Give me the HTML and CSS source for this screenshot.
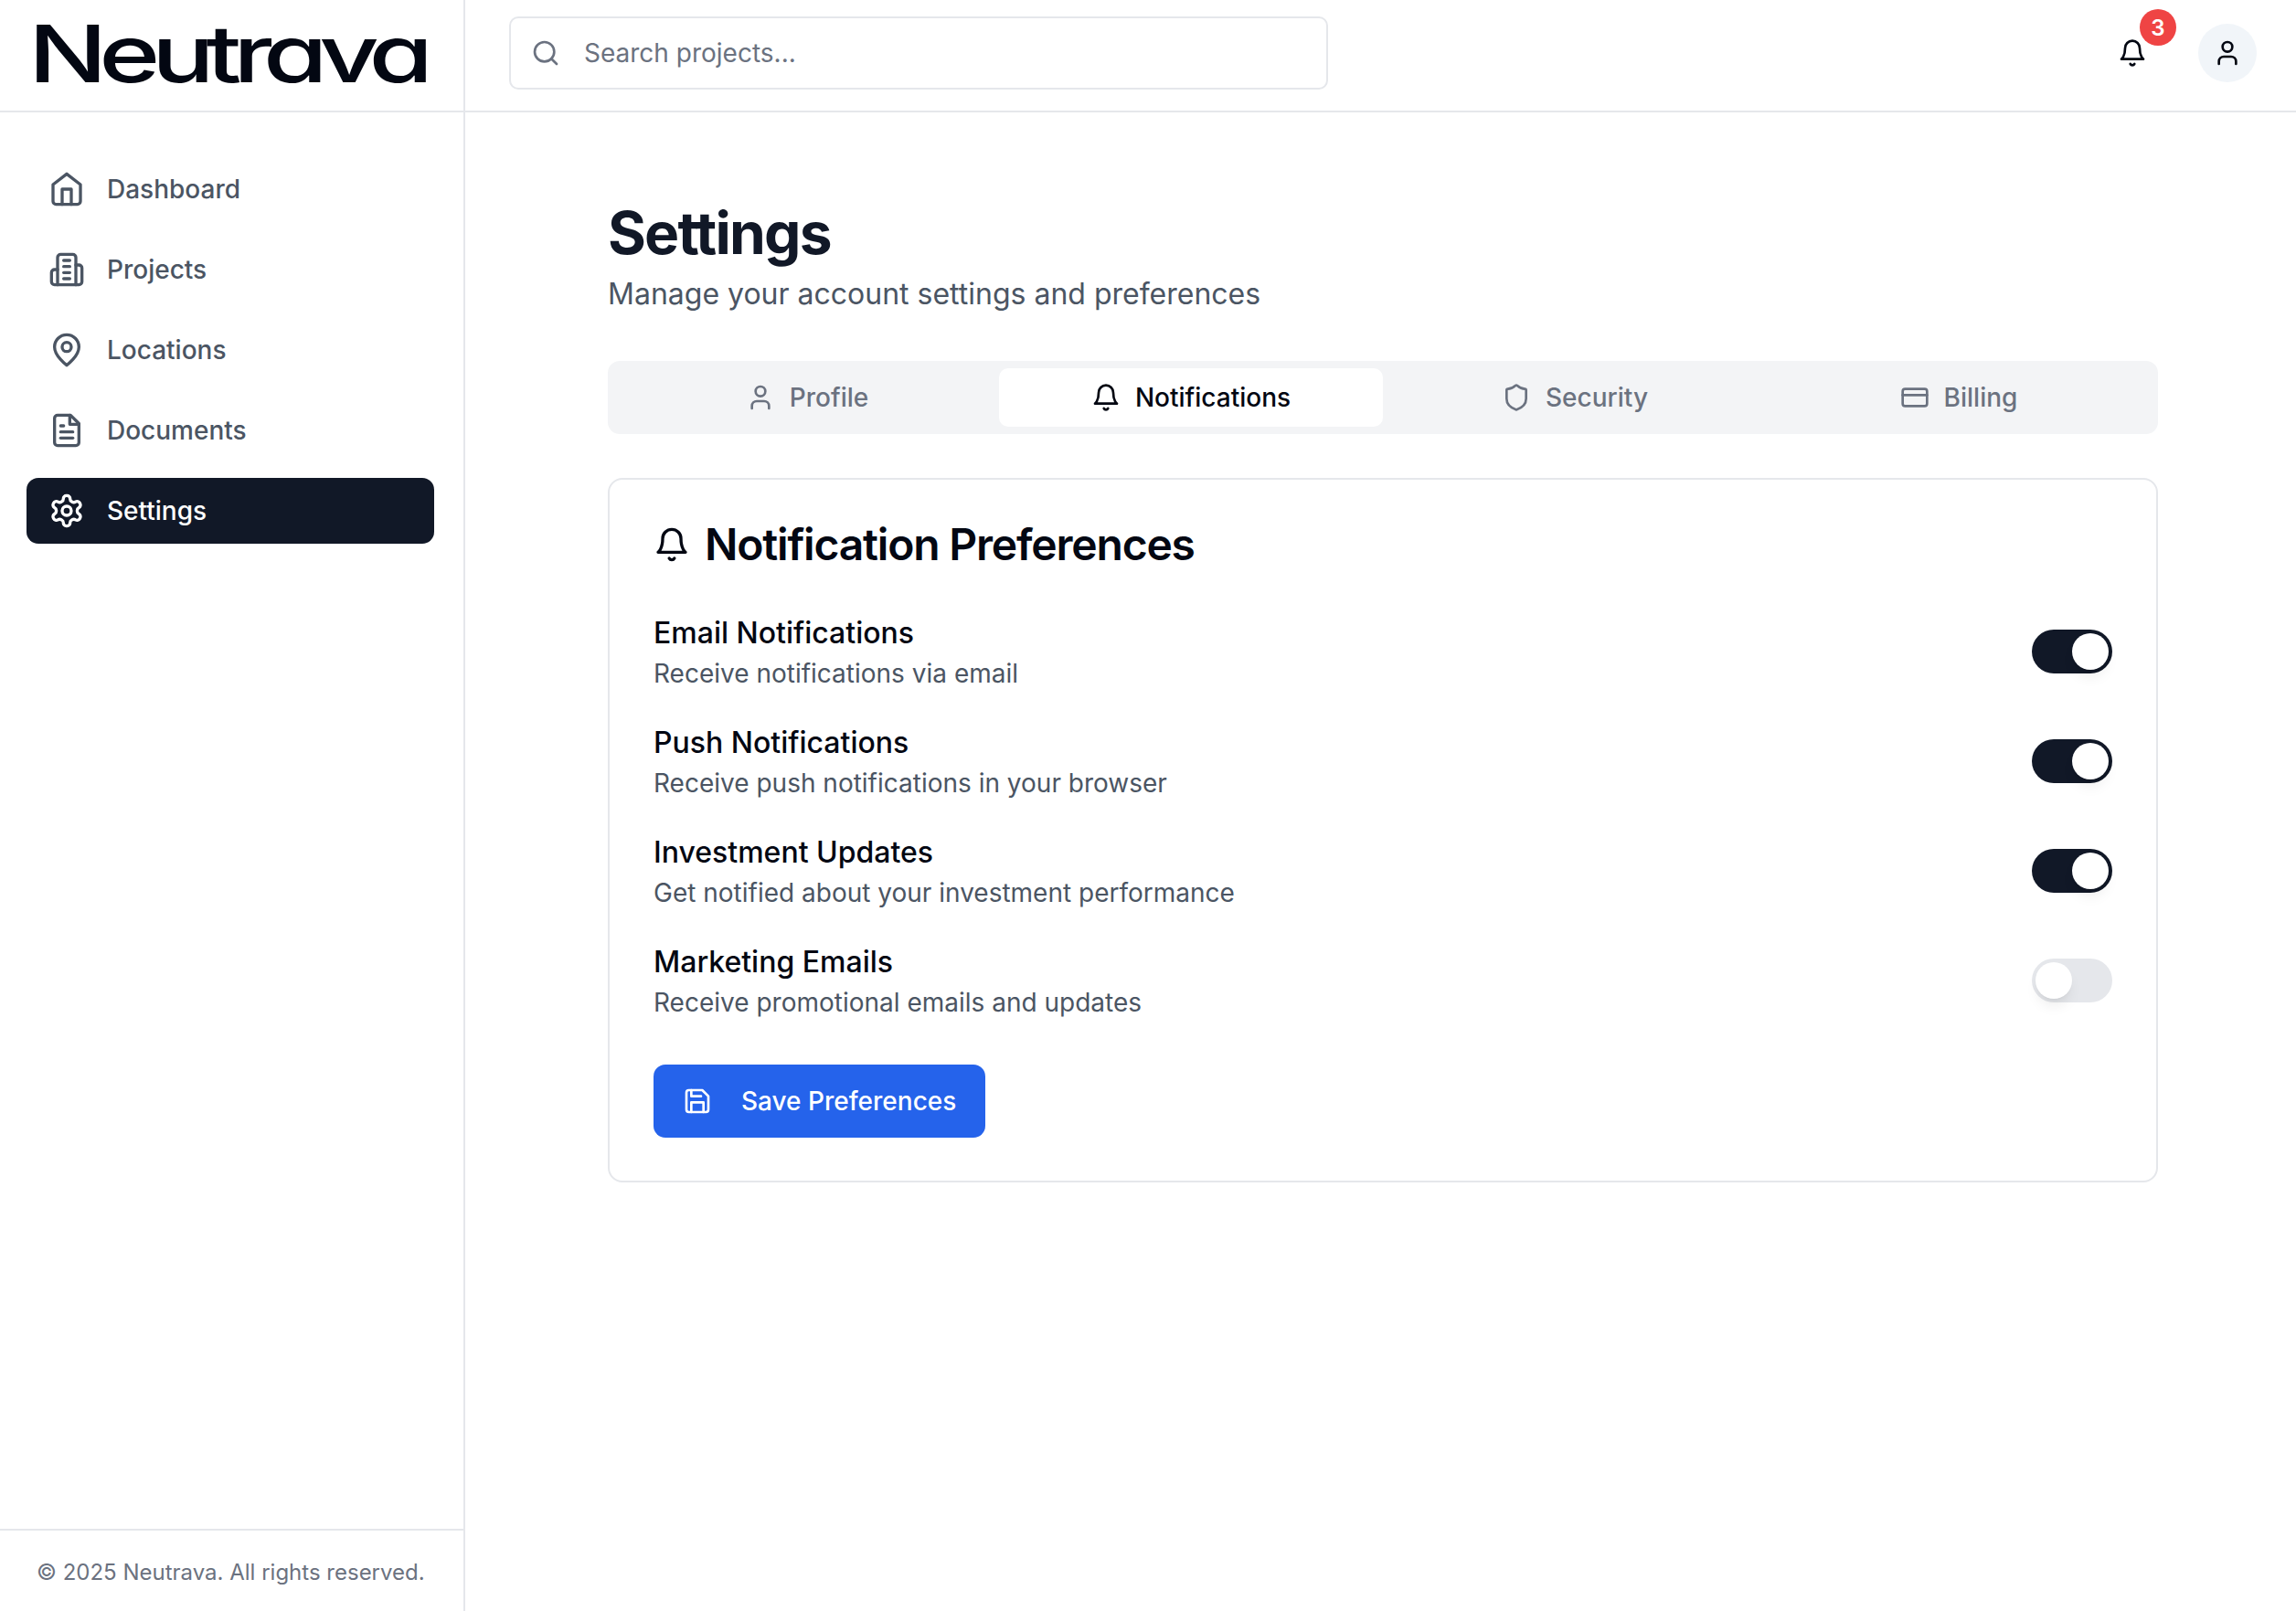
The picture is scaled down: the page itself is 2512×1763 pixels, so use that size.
FILE: index.html
```html
<!DOCTYPE html>
<html lang="en">
<head>
<meta charset="utf-8">
<title>Neutrava Settings</title>
<link rel="stylesheet" href="styles.css">
</head>
<body>
<svg class="sprite" aria-hidden="true">
  <symbol id="i-home" viewBox="0 0 24 24"><path d="m3 9 9-7 9 7v11a2 2 0 0 1-2 2H5a2 2 0 0 1-2-2z"/><polyline points="9 22 9 12 15 12 15 22"/></symbol>
  <symbol id="i-building" viewBox="0 0 24 24"><path d="M6 22V4a2 2 0 0 1 2-2h8a2 2 0 0 1 2 2v18Z"/><path d="M6 12H4a2 2 0 0 0-2 2v6a2 2 0 0 0 2 2h2"/><path d="M18 9h2a2 2 0 0 1 2 2v9a2 2 0 0 1-2 2h-2"/><path d="M10 6h4"/><path d="M10 10h4"/><path d="M10 14h4"/><path d="M10 18h4"/></symbol>
  <symbol id="i-pin" viewBox="0 0 24 24"><path d="M20 10c0 6-8 12-8 12s-8-6-8-12a8 8 0 0 1 16 0Z"/><circle cx="12" cy="10" r="3"/></symbol>
  <symbol id="i-file" viewBox="0 0 24 24"><path d="M14.5 2H6a2 2 0 0 0-2 2v16a2 2 0 0 0 2 2h12a2 2 0 0 0 2-2V7.5L14.5 2z"/><polyline points="14 2 14 8 20 8"/><line x1="16" y1="13" x2="8" y2="13"/><line x1="16" y1="17" x2="8" y2="17"/><line x1="10" y1="9" x2="8" y2="9"/></symbol>
  <symbol id="i-gear" viewBox="0 0 24 24"><path d="M12.22 2h-.44a2 2 0 0 0-2 2v.18a2 2 0 0 1-1 1.73l-.43.25a2 2 0 0 1-2 0l-.15-.08a2 2 0 0 0-2.73.73l-.22.38a2 2 0 0 0 .73 2.73l.15.1a2 2 0 0 1 1 1.72v.51a2 2 0 0 1-1 1.74l-.15.09a2 2 0 0 0-.73 2.73l.22.38a2 2 0 0 0 2.73.73l.15-.08a2 2 0 0 1 2 0l.43.25a2 2 0 0 1 1 1.73V20a2 2 0 0 0 2 2h.44a2 2 0 0 0 2-2v-.18a2 2 0 0 1 1-1.73l.43-.25a2 2 0 0 1 2 0l.15.08a2 2 0 0 0 2.73-.73l.22-.39a2 2 0 0 0-.73-2.73l-.15-.08a2 2 0 0 1-1-1.74v-.5a2 2 0 0 1 1-1.74l.15-.09a2 2 0 0 0 .73-2.73l-.22-.38a2 2 0 0 0-2.73-.73l-.15.08a2 2 0 0 1-2 0l-.43-.25a2 2 0 0 1-1-1.73V4a2 2 0 0 0-2-2z"/><circle cx="12" cy="12" r="3"/></symbol>
  <symbol id="i-bell" viewBox="0 0 24 24"><path d="M6 8a6 6 0 0 1 12 0c0 7 3 9 3 9H3s3-2 3-9"/><path d="M10.3 21a1.94 1.94 0 0 0 3.4 0"/></symbol>
  <symbol id="i-user" viewBox="0 0 24 24"><path d="M19 21v-2a4 4 0 0 0-4-4H9a4 4 0 0 0-4 4v2"/><circle cx="12" cy="7" r="4"/></symbol>
  <symbol id="i-shield" viewBox="0 0 24 24"><path d="M20 13c0 5-3.5 7.5-7.66 8.95a1 1 0 0 1-.67-.01C7.5 20.5 4 18 4 13V6a1 1 0 0 1 1-1c2 0 4.5-1.2 6.24-2.72a1.17 1.17 0 0 1 1.52 0C14.51 3.81 17 5 19 5a1 1 0 0 1 1 1z"/></symbol>
  <symbol id="i-card" viewBox="0 0 24 24"><rect x="2" y="5" width="20" height="14" rx="2"/><line x1="2" y1="10" x2="22" y2="10"/></symbol>
  <symbol id="i-save" viewBox="0 0 24 24"><path d="M19 21H5a2 2 0 0 1-2-2V5a2 2 0 0 1 2-2h11l5 5v11a2 2 0 0 1-2 2z"/><polyline points="17 21 17 13 7 13 7 21"/><polyline points="7 3 7 8 15 8"/></symbol>
  <symbol id="i-search" viewBox="0 0 24 24"><circle cx="11" cy="11" r="8"/><line x1="21" y1="21" x2="16.65" y2="16.65"/></symbol>
</svg>
<div class="app">
  <header class="topbar">
    <div class="brand">
      <svg class="logo" viewBox="0 0 427 64" role="img" aria-label="Neutrava"><text x="-8" y="62.5" textLength="434" lengthAdjust="spacingAndGlyphs">Neutrava</text></svg>
    </div>
    <div class="topbar-main">
      <label class="search">
        <svg class="ic ic-32 ic-muted"><use href="#i-search"/></svg>
        <span class="search-text">Search projects...</span>
      </label>
      <div class="top-actions">
        <div class="bell-wrap">
          <svg class="ic ic-32"><use href="#i-bell"/></svg>
          <span class="badge">3</span>
        </div>
        <div class="avatar"><svg class="ic ic-32"><use href="#i-user"/></svg></div>
      </div>
    </div>
  </header>
  <div class="body">
    <aside class="sidebar">
      <nav class="nav">
        <a class="nav-item"><svg class="ic ic-40"><use href="#i-home"/></svg><span>Dashboard</span></a>
        <a class="nav-item"><svg class="ic ic-40"><use href="#i-building"/></svg><span>Projects</span></a>
        <a class="nav-item"><svg class="ic ic-40"><use href="#i-pin"/></svg><span>Locations</span></a>
        <a class="nav-item"><svg class="ic ic-40"><use href="#i-file"/></svg><span>Documents</span></a>
        <a class="nav-item is-active"><svg class="ic ic-40"><use href="#i-gear"/></svg><span>Settings</span></a>
      </nav>
      <footer class="side-foot">© 2025 Neutrava. All rights reserved.</footer>
    </aside>
    <main class="main">
      <h1 class="title">Settings</h1>
      <p class="subtitle">Manage your account settings and preferences</p>
      <div class="tabs">
        <div class="tab"><svg class="ic ic-32"><use href="#i-user"/></svg><span>Profile</span></div>
        <div class="tab is-active"><svg class="ic ic-32"><use href="#i-bell"/></svg><span>Notifications</span></div>
        <div class="tab"><svg class="ic ic-32"><use href="#i-shield"/></svg><span>Security</span></div>
        <div class="tab"><svg class="ic ic-32"><use href="#i-card"/></svg><span>Billing</span></div>
      </div>
      <section class="card">
        <h2 class="card-title"><svg class="ic ic-40"><use href="#i-bell"/></svg><span>Notification Preferences</span></h2>
        <div class="prefs">
          <div class="pref"><div><div class="pref-name">Email Notifications</div><div class="pref-desc">Receive notifications via email</div></div><span class="toggle is-on"><i class="knob"></i></span></div>
          <div class="pref"><div><div class="pref-name">Push Notifications</div><div class="pref-desc">Receive push notifications in your browser</div></div><span class="toggle is-on"><i class="knob"></i></span></div>
          <div class="pref"><div><div class="pref-name">Investment Updates</div><div class="pref-desc">Get notified about your investment performance</div></div><span class="toggle is-on"><i class="knob"></i></span></div>
          <div class="pref"><div><div class="pref-name">Marketing Emails</div><div class="pref-desc">Receive promotional emails and updates</div></div><span class="toggle"><i class="knob"></i></span></div>
        </div>
        <button class="save"><svg class="ic ic-32"><use href="#i-save"/></svg><span>Save Preferences</span></button>
      </section>
    </main>
  </div>
</div>
</body>
</html>
```

FILE: styles.css
```css
* { box-sizing: border-box; }
html, body { margin: 0; padding: 0; height: 100%; background: #fff; }
body { font-family: Inter, "Noto Sans", sans-serif; color: #030712; }
.sprite { display: none; }
.ic { display: block; flex: none; fill: none; stroke: currentColor; stroke-width: 2; stroke-linecap: round; stroke-linejoin: round; }
.ic-32 { width: 32px; height: 32px; }
.ic-40 { width: 40px; height: 40px; }
.ic-muted { color: #6b7280; }

.app { display: flex; flex-direction: column; height: 1763px; }
.topbar { display: flex; height: 123px; flex: none; border-bottom: 2px solid #e5e7eb; }
.brand { width: 509px; flex: none; border-right: 2px solid #e5e7eb; padding: 27px 0 0 39px; }
.logo { display: block; width: 427px; height: 64px; overflow: visible; }
.logo text { font-family: Inter, sans-serif; font-weight: 500; font-size: 87px; letter-spacing: -7px; font-feature-settings: "cv11" 1; fill: #030712; }
.topbar-main { flex: 1; display: flex; align-items: center; justify-content: space-between; padding: 0 43px 5px 48px; }
.search { width: 896px; height: 80px; border: 2px solid #e5e7eb; border-radius: 10px; display: flex; align-items: center; gap: 26px; padding: 0 22px; }
.search-text { font-size: 28px; color: #6b7280; }
.top-actions { display: flex; align-items: center; gap: 56px; }
.bell-wrap { position: relative; width: 32px; height: 32px; }
.badge { position: absolute; top: -32px; left: 24px; width: 40px; height: 40px; border-radius: 50%; background: #ef4444; color: #fff; font-size: 24px; font-weight: 600; display: flex; align-items: center; justify-content: center; }
.avatar { width: 64px; height: 64px; border-radius: 50%; background: #f1f5f9; display: flex; align-items: center; justify-content: center; }

.body { flex: 1; display: flex; min-height: 0; }
.sidebar { width: 509px; flex: none; border-right: 2px solid #e5e7eb; display: flex; flex-direction: column; justify-content: space-between; }
.nav { display: flex; flex-direction: column; gap: 16px; padding: 48px 32px 0 29px; }
.nav-item { display: flex; align-items: center; gap: 24px; height: 72px; padding: 0 24px; border-radius: 13px; font-size: 28px; font-weight: 500; color: #4b5563; }
.nav-item.is-active { background: #111827; color: #fff; }
.side-foot { border-top: 2px solid #e5e7eb; height: 90px; padding: 2px 0 0 40px; display: flex; align-items: center; font-size: 24px; color: #6b7280; }

.main { flex: 1; padding: 96px 151px 0 156px; }
.title { margin: 0; font-size: 64px; line-height: 72px; letter-spacing: -1.8px; font-weight: 700; color: #111827; }
.subtitle { margin: 7px 0 0; font-size: 32px; line-height: 48px; color: #4b5563; }
.tabs { margin-top: 49px; height: 80px; background: #f3f4f6; border-radius: 13px; padding: 8px; display: grid; grid-template-columns: repeat(4, 1fr); gap: 0; }
.tab { display: flex; align-items: center; justify-content: center; gap: 16px; border-radius: 10px; font-size: 28px; font-weight: 500; color: #6b7280; }
.tab.is-active { background: #fff; color: #030712; }
.card { margin-top: 48px; border: 2px solid #e5e7eb; border-radius: 16px; padding: 48px; height: 771px; }
.card-title { margin: 0; display: flex; align-items: center; gap: 16px; font-size: 48px; line-height: 46px; letter-spacing: -1.2px; font-weight: 600; color: #030712; }
.prefs { margin-top: 46px; display: flex; flex-direction: column; gap: 24px; }
.pref { display: flex; align-items: center; justify-content: space-between; height: 96px; }
.pref-name { font-size: 32px; line-height: 48px; font-weight: 500; color: #030712; }
.pref-desc { font-size: 28px; line-height: 40px; color: #4b5563; }
.toggle { position: relative; width: 88px; height: 48px; border-radius: 24px; background: #e5e7eb; }
.toggle.is-on { background: #111827; }
.knob { position: absolute; top: 4px; left: 4px; width: 40px; height: 40px; border-radius: 50%; background: #fff; box-shadow: 0 10px 15px -3px rgba(0,0,0,.08), 0 4px 6px -4px rgba(0,0,0,.08); }
.toggle.is-on .knob { left: 44px; }
.save { margin-top: 44px; height: 80px; width: 363px; border: 0; border-radius: 13px; background: #2563eb; color: #fff; display: flex; align-items: center; gap: 32px; padding: 0 0 0 32px; font-family: inherit; font-size: 28px; font-weight: 500; white-space: nowrap; }
```
